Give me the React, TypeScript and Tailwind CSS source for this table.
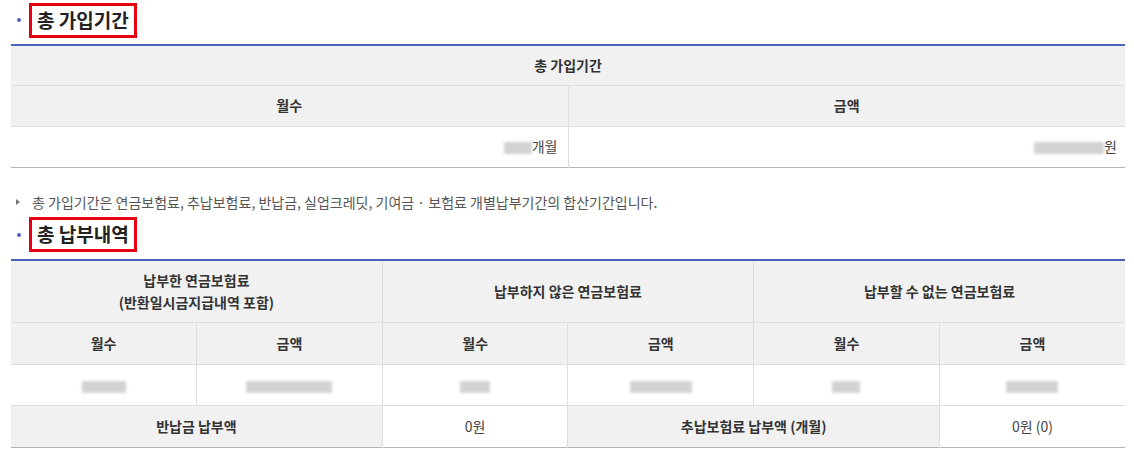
import React from 'react';

const font = { fontFamily: '"Noto Sans CJK KR", "Noto Sans", sans-serif' };

function Blur({ w }: { w: number }) {
  return (
    <span
      className="inline-block h-[12px] align-middle bg-[#c8c8c8] blur-[1.5px] opacity-80"
      style={{ width: w }}
    />
  );
}

function SectionTitle({ children }: { children: React.ReactNode }) {
  return (
    <div className="flex items-center h-[36px]">
      <span className="ml-[17px] mr-[8px] h-[4px] w-[4px] rounded-full bg-[#4b62b8]" />
      <span className="flex h-[35px] items-center border-[3px] border-[#e60012] px-[5px] text-[19px] font-bold text-[#222]">
        {children}
      </span>
    </div>
  );
}

const th = 'bg-[#f1f1f1] border border-[#dedede] font-bold text-[#333] text-center';
const td = 'bg-white border border-[#dedede] text-[#444] text-center';

export default function App() {
  return (
    <div className="w-[1134px] h-[457px] bg-white text-[14px] overflow-hidden" style={font}>
      <div className="pt-[2px]">
        <SectionTitle>총 가입기간</SectionTitle>
      </div>

      <div className="mx-[11px] mt-[6px] w-[1114px]">
        <table className="w-full table-fixed border-collapse border-t-2 border-t-[#4b62b8] border-b border-b-[#b4b4b4]">
          <tbody>
            <tr className="h-[40px]">
              <th colSpan={2} className={`${th} border-x-0 border-t-0`}>총 가입기간</th>
            </tr>
            <tr className="h-[41px]">
              <th className={`${th} border-l-0`}>월수</th>
              <th className={`${th} border-r-0`}>금액</th>
            </tr>
            <tr className="h-[41px]">
              <td className={`${td} border-l-0 text-right pr-[10px] border-b-0`}>
                <Blur w={28} />개월
              </td>
              <td className={`${td} border-r-0 text-right pr-[8px] border-b-0`}>
                <Blur w={70} />원
              </td>
            </tr>
          </tbody>
        </table>
      </div>

      <div className="mt-[26px] flex items-center pl-[16px] text-[14px] text-[#555] leading-[17px]">
        <span className="mr-[12px] inline-block h-0 w-0 border-y-[3px] border-l-[4px] border-y-transparent border-l-[#777]" />
        총 가입기간은 연금보험료, 추납보험료, 반납금, 실업크레딧, 기여금 · 보험료 개별납부기간의 합산기간입니다.
      </div>

      <div className="mt-[6px]">
        <SectionTitle>총 납부내역</SectionTitle>
      </div>

      <div className="mx-[11px] mt-[6px] w-[1114px]">
        <table className="w-full table-fixed border-collapse border-t-2 border-t-[#4b62b8] border-b border-b-[#b4b4b4]">
          <tbody>
            <tr className="h-[63px]">
              <th colSpan={2} className={`${th} border-l-0 border-t-0 leading-[22px]`}>
                납부한 연금보험료
                <br />
                (반환일시금지급내역 포함)
              </th>
              <th colSpan={2} className={`${th} border-t-0`}>납부하지 않은 연금보험료</th>
              <th colSpan={2} className={`${th} border-r-0 border-t-0`}>납부할 수 없는 연금보험료</th>
            </tr>
            <tr className="h-[42px]">
              <th className={`${th} border-l-0`}>월수</th>
              <th className={th}>금액</th>
              <th className={th}>월수</th>
              <th className={th}>금액</th>
              <th className={th}>월수</th>
              <th className={`${th} border-r-0`}>금액</th>
            </tr>
            <tr className="h-[41px]">
              <td className={`${td} border-l-0`}><Blur w={44} /></td>
              <td className={td}><Blur w={86} /></td>
              <td className={td}><Blur w={30} /></td>
              <td className={td}><Blur w={62} /></td>
              <td className={td}><Blur w={28} /></td>
              <td className={`${td} border-r-0`}><Blur w={52} /></td>
            </tr>
            <tr className="h-[42px]">
              <th colSpan={2} className={`${th} border-l-0 border-b-0`}>반납금 납부액</th>
              <td className={`${td} border-b-0`}>0원</td>
              <th colSpan={2} className={`${th} border-b-0`}>추납보험료 납부액 (개월)</th>
              <td className={`${td} border-r-0 border-b-0`}>0원 (0)</td>
            </tr>
          </tbody>
        </table>
      </div>
    </div>
  );
}
